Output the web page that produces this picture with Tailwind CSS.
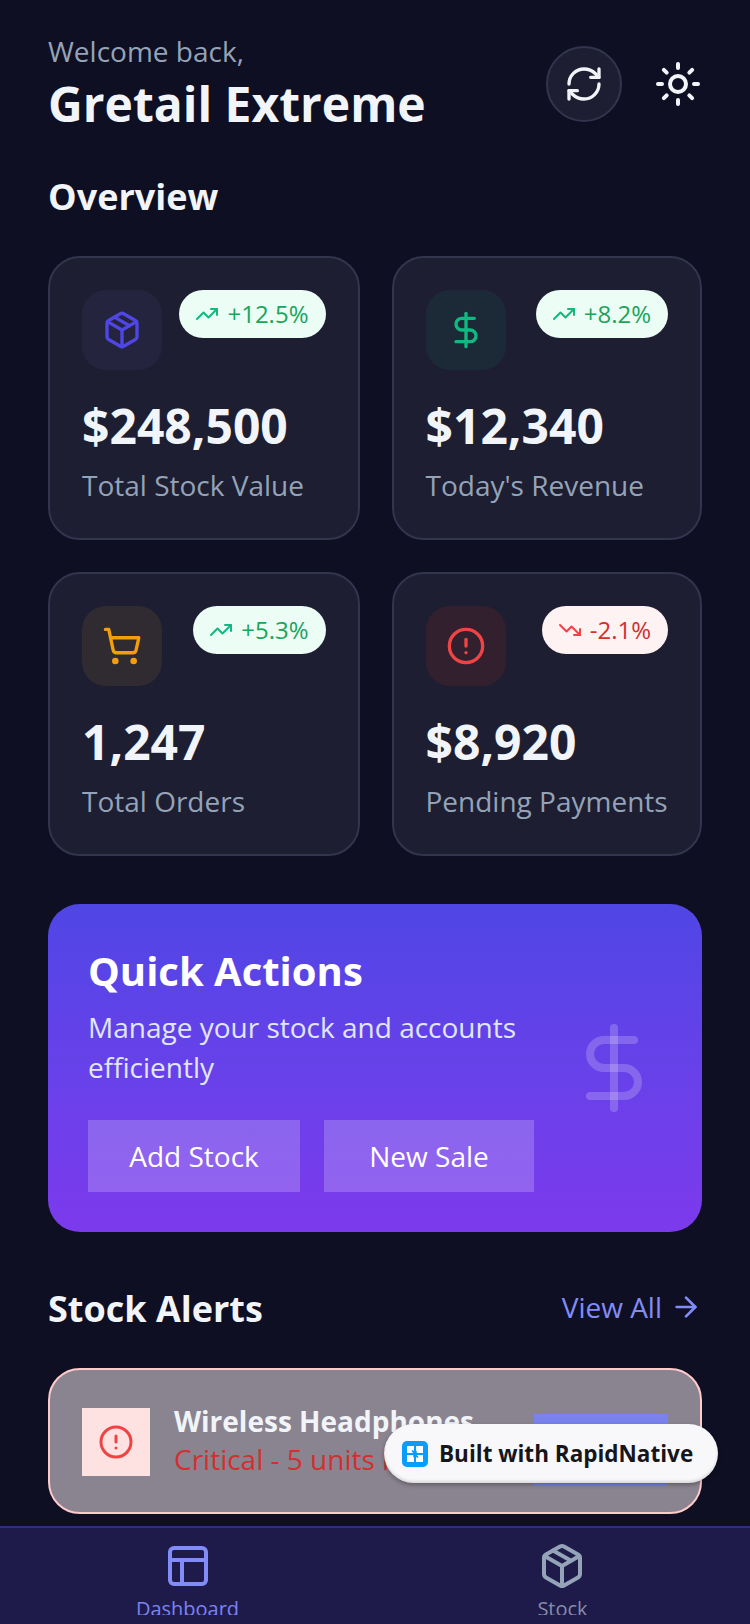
<!DOCTYPE html>
<html><head><meta charset="utf-8"><script src="https://cdn.jsdelivr.net/npm/@tailwindcss/browser@4"></script></head>
<body class="m-0 bg-[#0f0f23]">
<div class="relative w-[750px] h-[1624px] overflow-hidden flex flex-col bg-[#0f0f23] font-['Open_Sans','Noto_Sans',sans-serif]">
  <main class="flex-1 min-h-0 overflow-hidden px-[48px] pt-[31px]">
    <header class="flex items-start justify-between h-[105px]">
      <div>
        <p class="text-[28px] leading-[40px] text-[#94a3b8]">Welcome back,</p>
        <h1 class="text-[48px] leading-[64px] font-bold text-[#f1f5f9] mt-[1px]">Gretail Extreme</h1>
      </div>
      <div class="flex items-center gap-[32px] pt-[15px]">
        <div class="w-[76px] h-[76px] rounded-full bg-[#1d1e31] border-2 border-[#33344d] flex items-center justify-center">
          <svg width="40" height="40" viewBox="0 0 24 24" fill="none" stroke="#f1f5f9" stroke-width="2" stroke-linecap="round" stroke-linejoin="round"><path d="M3 12a9 9 0 0 1 9-9 9.75 9.75 0 0 1 6.74 2.74L21 8"/><path d="M21 3v5h-5"/><path d="M21 12a9 9 0 0 1-9 9 9.75 9.75 0 0 1-6.74-2.74L3 16"/><path d="M8 16H3v5"/></svg>
        </div>
        <svg width="48" height="48" viewBox="0 0 24 24" fill="none" stroke="#f1f5f9" stroke-width="2" stroke-linecap="round" stroke-linejoin="round"><circle cx="12" cy="12" r="4"/><path d="M12 2v2"/><path d="M12 20v2"/><path d="m4.93 4.93 1.41 1.41"/><path d="m17.66 17.66 1.41 1.41"/><path d="M2 12h2"/><path d="M20 12h2"/><path d="m6.34 17.66-1.41 1.41"/><path d="m19.07 4.93-1.41 1.41"/></svg>
      </div>
    </header>
    <h2 class="text-[36px] leading-[48px] font-bold text-[#f1f5f9] mt-[37px]">Overview</h2>
    <div class="grid grid-cols-[311.5px_310.5px] gap-[32px] mt-[35px]">
      <div class="h-[284px] rounded-[32px] bg-[#1d1e31] border-2 border-[#33344d] p-[32px]">
        <div class="flex items-start justify-between">
          <div class="w-[80px] h-[80px] rounded-[24px] bg-[#25243f] flex items-center justify-center">
            <svg width="40" height="40" viewBox="0 0 24 24" fill="none" stroke="#4f46e5" stroke-width="2" stroke-linecap="round" stroke-linejoin="round"><path d="M21 8a2 2 0 0 0-1-1.73l-7-4a2 2 0 0 0-2 0l-7 4A2 2 0 0 0 3 8v8a2 2 0 0 0 1 1.73l7 4a2 2 0 0 0 2 0l7-4A2 2 0 0 0 21 16Z"/><path d="m3.3 7 8.7 5 8.7-5"/><path d="M12 22V12"/><path d="m7.5 4.27 9 5.15"/></svg>
          </div>
          <div class="h-[48px] rounded-full bg-[#ecfdf5] pl-[16px] pr-[17px] flex items-center gap-[8px]">
            <svg width="24" height="24" viewBox="0 0 24 24" fill="none" stroke="#10b981" stroke-width="2" stroke-linecap="round" stroke-linejoin="round"><path d="M22 7 13.5 15.5 8.5 10.5 2 17"/><path d="M16 7h6v6"/></svg>
            <span class="text-[24px] leading-[32px] text-[#1aa45c]">+12.5%</span>
          </div>
        </div>
        <p class="text-[48px] leading-[64px] font-bold text-[#f1f5f9] mt-[24px]">$248,500</p>
        <p class="text-[28px] leading-[40px] text-[#94a3b8] mt-[7px]">Total Stock Value</p>
      </div>
      <div class="h-[284px] rounded-[32px] bg-[#1d1e31] border-2 border-[#33344d] p-[32px]">
        <div class="flex items-start justify-between">
          <div class="w-[80px] h-[80px] rounded-[24px] bg-[#1c2a37] flex items-center justify-center">
            <svg width="40" height="40" viewBox="0 0 24 24" fill="none" stroke="#10b981" stroke-width="2" stroke-linecap="round" stroke-linejoin="round"><path d="M12 2v20"/><path d="M17 5H9.5a3.5 3.5 0 0 0 0 7h5a3.5 3.5 0 0 1 0 7H6"/></svg>
          </div>
          <div class="h-[48px] rounded-full bg-[#ecfdf5] pl-[16px] pr-[17px] flex items-center gap-[8px]">
            <svg width="24" height="24" viewBox="0 0 24 24" fill="none" stroke="#10b981" stroke-width="2" stroke-linecap="round" stroke-linejoin="round"><path d="M22 7 13.5 15.5 8.5 10.5 2 17"/><path d="M16 7h6v6"/></svg>
            <span class="text-[24px] leading-[32px] text-[#1aa45c]">+8.2%</span>
          </div>
        </div>
        <p class="text-[48px] leading-[64px] font-bold text-[#f1f5f9] mt-[24px]">$12,340</p>
        <p class="text-[28px] leading-[40px] text-[#94a3b8] mt-[7px]">Today's Revenue</p>
      </div>
      <div class="h-[284px] rounded-[32px] bg-[#1d1e31] border-2 border-[#33344d] p-[32px]">
        <div class="flex items-start justify-between">
          <div class="w-[80px] h-[80px] rounded-[24px] bg-[#302a31] flex items-center justify-center">
            <svg width="40" height="40" viewBox="0 0 24 24" fill="none" stroke="#f59e0b" stroke-width="2" stroke-linecap="round" stroke-linejoin="round"><circle cx="8" cy="21" r="1"/><circle cx="19" cy="21" r="1"/><path d="M2.05 2.05h2l2.66 12.42a2 2 0 0 0 2 1.58h9.78a2 2 0 0 0 1.95-1.57l1.65-7.43H5.12"/></svg>
          </div>
          <div class="h-[48px] rounded-full bg-[#ecfdf5] pl-[16px] pr-[17px] flex items-center gap-[8px]">
            <svg width="24" height="24" viewBox="0 0 24 24" fill="none" stroke="#10b981" stroke-width="2" stroke-linecap="round" stroke-linejoin="round"><path d="M22 7 13.5 15.5 8.5 10.5 2 17"/><path d="M16 7h6v6"/></svg>
            <span class="text-[24px] leading-[32px] text-[#1aa45c]">+5.3%</span>
          </div>
        </div>
        <p class="text-[48px] leading-[64px] font-bold text-[#f1f5f9] mt-[24px]">1,247</p>
        <p class="text-[28px] leading-[40px] text-[#94a3b8] mt-[7px]">Total Orders</p>
      </div>
      <div class="h-[284px] rounded-[32px] bg-[#1d1e31] border-2 border-[#33344d] p-[32px]">
        <div class="flex items-start justify-between">
          <div class="w-[80px] h-[80px] rounded-[24px] bg-[#33202e] flex items-center justify-center">
            <svg width="40" height="40" viewBox="0 0 24 24" fill="none" stroke="#ef4444" stroke-width="2" stroke-linecap="round" stroke-linejoin="round"><circle cx="12" cy="12" r="10"/><path d="M12 8v4"/><path d="M12 16h.01"/></svg>
          </div>
          <div class="h-[48px] rounded-full bg-[#fef2f2] pl-[16px] pr-[17px] flex items-center gap-[8px]">
            <svg width="24" height="24" viewBox="0 0 24 24" fill="none" stroke="#ef4444" stroke-width="2" stroke-linecap="round" stroke-linejoin="round"><path d="M22 17 13.5 8.5 8.5 13.5 2 7"/><path d="M16 17h6v-6"/></svg>
            <span class="text-[24px] leading-[32px] text-[#d32f2f]">-2.1%</span>
          </div>
        </div>
        <p class="text-[48px] leading-[64px] font-bold text-[#f1f5f9] mt-[24px]">$8,920</p>
        <p class="text-[28px] leading-[40px] text-[#94a3b8] mt-[7px] whitespace-nowrap">Pending Payments</p>
      </div>
    </div>
    <section class="relative mt-[48px] h-[328px] rounded-[32px] bg-gradient-to-b from-[#4f46e5] to-[#7c3aed] px-[40px] pt-[41px]">
      <h2 class="text-[40px] leading-[52px] font-bold text-white">Quick Actions</h2>
      <p class="text-[28px] leading-[40px] text-[#e0e7ff] mt-[10px] w-[470px]">Manage your stock and accounts efficiently</p>
      <div class="flex gap-[24px] mt-[33px]">
        <div class="h-[72px] w-[212px] bg-white/20 flex items-center justify-center text-[28px] text-white">Add Stock</div>
        <div class="h-[72px] w-[210px] bg-white/20 flex items-center justify-center text-[28px] text-white">New Sale</div>
      </div>
      <svg class="absolute right-[40px] top-[116px]" width="96" height="96" viewBox="0 0 24 24" fill="none" stroke="#ffffff" stroke-opacity="0.2" stroke-width="2" stroke-linecap="round" stroke-linejoin="round"><path d="M12 2v20"/><path d="M17 5H9.5a3.5 3.5 0 0 0 0 7h5a3.5 3.5 0 0 1 0 7H6"/></svg>
    </section>
    <div class="flex items-center justify-between mt-[53px] h-[48px]">
      <h2 class="text-[36px] leading-[48px] font-bold text-[#f1f5f9]">Stock Alerts</h2>
      <div class="flex items-center gap-[8px] pb-[4px]">
        <span class="text-[28px] text-[#818cf8]">View All</span>
        <svg width="32" height="32" viewBox="0 0 24 24" fill="none" stroke="#818cf8" stroke-width="2" stroke-linecap="round" stroke-linejoin="round"><path d="M5 12h14"/><path d="m12 5 7 7-7 7"/></svg>
      </div>
    </div>
    <div class="mt-[35px] h-[146px] rounded-[32px] bg-[#8a8490] border-2 border-[#fecaca] px-[32px] flex items-center">
      <div class="w-[68px] h-[68px] mt-[2px] bg-[#fee2e2] flex items-center justify-center shrink-0">
        <svg width="36" height="36" viewBox="0 0 24 24" fill="none" stroke="#ef4444" stroke-width="2" stroke-linecap="round" stroke-linejoin="round"><circle cx="12" cy="12" r="10"/><path d="M12 8v4"/><path d="M12 16h.01"/></svg>
      </div>
      <div class="ml-[24px] flex-1 min-w-0">
        <p class="text-[28px] leading-[36px] font-bold text-[#f1f5f9] whitespace-nowrap">Wireless Headphones</p>
        <p class="text-[28px] leading-[40px] text-[#d32f2f] whitespace-nowrap">Critical - 5 units left</p>
      </div>
      <div class="w-[134px] h-[72px] mt-[18px] bg-[#7a82ee] shrink-0"></div>
    </div>
  </main>
  <nav class="h-[98px] shrink-0 bg-[#1e1b4b] border-t-2 border-[#312e81] flex">
    <div class="flex-1 flex flex-col items-center pt-[14px] h-[87px] overflow-hidden">
      <svg class="shrink-0" width="48" height="48" viewBox="0 0 24 24" fill="none" stroke="#818cf8" stroke-width="2" stroke-linecap="round" stroke-linejoin="round"><rect x="3" y="3" width="18" height="18" rx="2"/><path d="M3 9h18"/><path d="M9 21V9"/></svg>
      <span class="shrink-0 text-[20px] leading-[28px] text-[#7a83ee] mt-[5px]">Dashboard</span>
    </div>
    <div class="flex-1 flex flex-col items-center pt-[14px] h-[87px] overflow-hidden">
      <svg class="shrink-0 mr-[1px]" width="48" height="48" viewBox="0 0 24 24" fill="none" stroke="#94a3b8" stroke-width="2" stroke-linecap="round" stroke-linejoin="round"><path d="M21 8a2 2 0 0 0-1-1.73l-7-4a2 2 0 0 0-2 0l-7 4A2 2 0 0 0 3 8v8a2 2 0 0 0 1 1.73l7 4a2 2 0 0 0 2 0l7-4A2 2 0 0 0 21 16Z"/><path d="m3.3 7 8.7 5 8.7-5"/><path d="M12 22V12"/><path d="m7.5 4.27 9 5.15"/></svg>
      <span class="shrink-0 text-[20px] leading-[28px] text-[#868ca6] mt-[5px]">Stock</span>
    </div>
  </nav>
  <div class="absolute left-[384px] top-[1424px] w-[334px] h-[59px] rounded-full bg-[#f8f8fb] shadow-[inset_0_-2px_3px_rgba(0,0,0,0.12),0_2px_4px_rgba(0,0,0,0.3)] flex items-center pl-[18px] gap-[11px]">
    <div class="w-[26px] h-[26px] rounded-[5px] bg-[#0a9cff] flex items-center justify-center shrink-0">
      <svg width="18" height="18" viewBox="0 0 18 18"><path d="M1 1h7v7H1zM10 1h7v7h-7zM1 10h7v7H1zM10 10h7v7h-7z" fill="#ffffff"/><path d="M6 5.5 9 9l3 3.5M7.5 6.5h2.5v2.5M8 9v2.5h2.5" fill="none" stroke="#0a9cff" stroke-width="1.5"/></svg>
    </div>
    <span class="text-[22.5px] leading-[32px] font-bold text-[#16161a] whitespace-nowrap">Built with RapidNative</span>
  </div>
</div>
</body></html>
